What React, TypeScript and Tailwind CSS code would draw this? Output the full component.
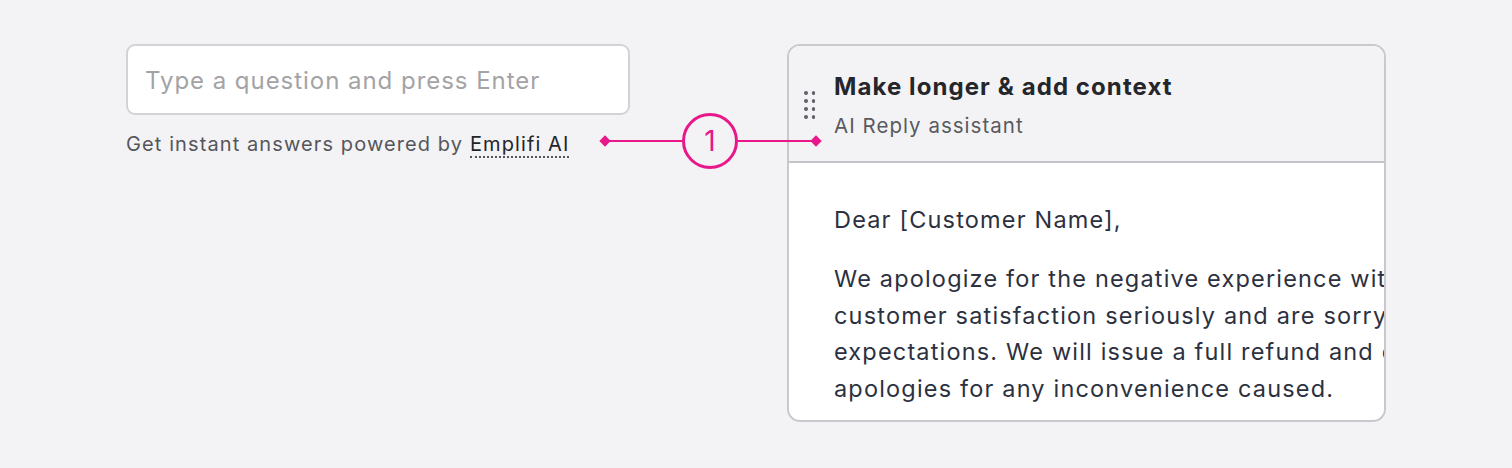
const LINES = [
  'We apologize for the negative experience with our product. We take',
  'customer satisfaction seriously and are sorry that we did not meet your',
  'expectations. We will issue a full refund and offer our sincere',
  'apologies for any inconvenience caused.',
]

function DragHandle() {
  return (
    <div className="grid grid-cols-2 gap-x-[4px] gap-y-[4.5px] pt-[5px]">
      {Array.from({ length: 8 }).map((_, i) => (
        <span key={i} className="h-[3.5px] w-[3.5px] rounded-full bg-[#5f6068]" />
      ))}
    </div>
  )
}

function Connector() {
  return (
    <svg
      aria-hidden
      className="absolute left-[596px] top-[112px]"
      width="230"
      height="60"
      viewBox="0 0 230 60"
      fill="none"
    >
      <path d="M9 29 H86 M142 29 H220" stroke="#e8178a" strokeWidth="2" />
      <rect x="5" y="25" width="8" height="8" transform="rotate(45 9 29)" fill="#e8178a" />
      <rect x="216" y="25" width="8" height="8" transform="rotate(45 220 29)" fill="#e8178a" />
      <circle cx="114" cy="29" r="26.5" stroke="#e8178a" strokeWidth="3" fill="#f3f3f5" />
      <text
        x="114"
        y="39"
        textAnchor="middle"
        fill="#e8178a"
        fontSize="28"
        fontFamily="Inter, sans-serif"
      >
        1
      </text>
    </svg>
  )
}

export default function App() {
  return (
    <div className="relative flex h-[468px] w-full gap-[157px] bg-[#f3f3f5] pl-[126px] pt-[44px] font-['Inter',sans-serif]">
      {/* question input + caption */}
      <div className="flex w-[504px] flex-col">
        <div className="flex h-[71px] items-center rounded-[9px] border-2 border-[#d3d3d6] bg-white px-[17px] pt-[2px]">
          <span className="text-[24px] tracking-[0.04em] text-[#a3a3a6]">Type a question and press Enter</span>
        </div>
        <p className="mt-[14px] text-[20px] tracking-[0.055em] text-[#55565c]">
          Get instant answers powered by{' '}
          <span className="border-b-2 border-dotted border-[#55565c] text-[#23242a]">Emplifi AI</span>
        </p>
      </div>

      {/* reply card */}
      <div className="flex h-[378px] w-[599px] flex-col overflow-hidden rounded-[13px] border-2 border-[#c9c9cd] bg-white">
        <div className="flex h-[117px] shrink-0 gap-[19px] border-b-2 border-[#c4c4c8] bg-[#f3f3f5] pl-[15px] pt-[26px]">
          <div className="pt-[14px]">
            <DragHandle />
          </div>
          <div className="flex flex-col">
            <span className="text-[24px] leading-[30px] font-bold tracking-[0.045em] text-[#25262b]">
              Make longer &amp; add context
            </span>
            <span className="mt-[10px] text-[20.5px] leading-[28px] tracking-[0.05em] text-[#595a60]">
              AI Reply assistant
            </span>
          </div>
        </div>
        <div className="flex flex-col pl-[45px] pt-[39px] text-[23.5px] tracking-[0.05em] text-[#2c3140]">
          <p className="whitespace-nowrap leading-[36px]">Dear [Customer Name],</p>
          <div className="mt-[23px] flex flex-col whitespace-nowrap leading-[36.5px]">
            {LINES.map(l => (
              <span key={l}>{l}</span>
            ))}
          </div>
        </div>
      </div>

      <Connector />
    </div>
  )
}
